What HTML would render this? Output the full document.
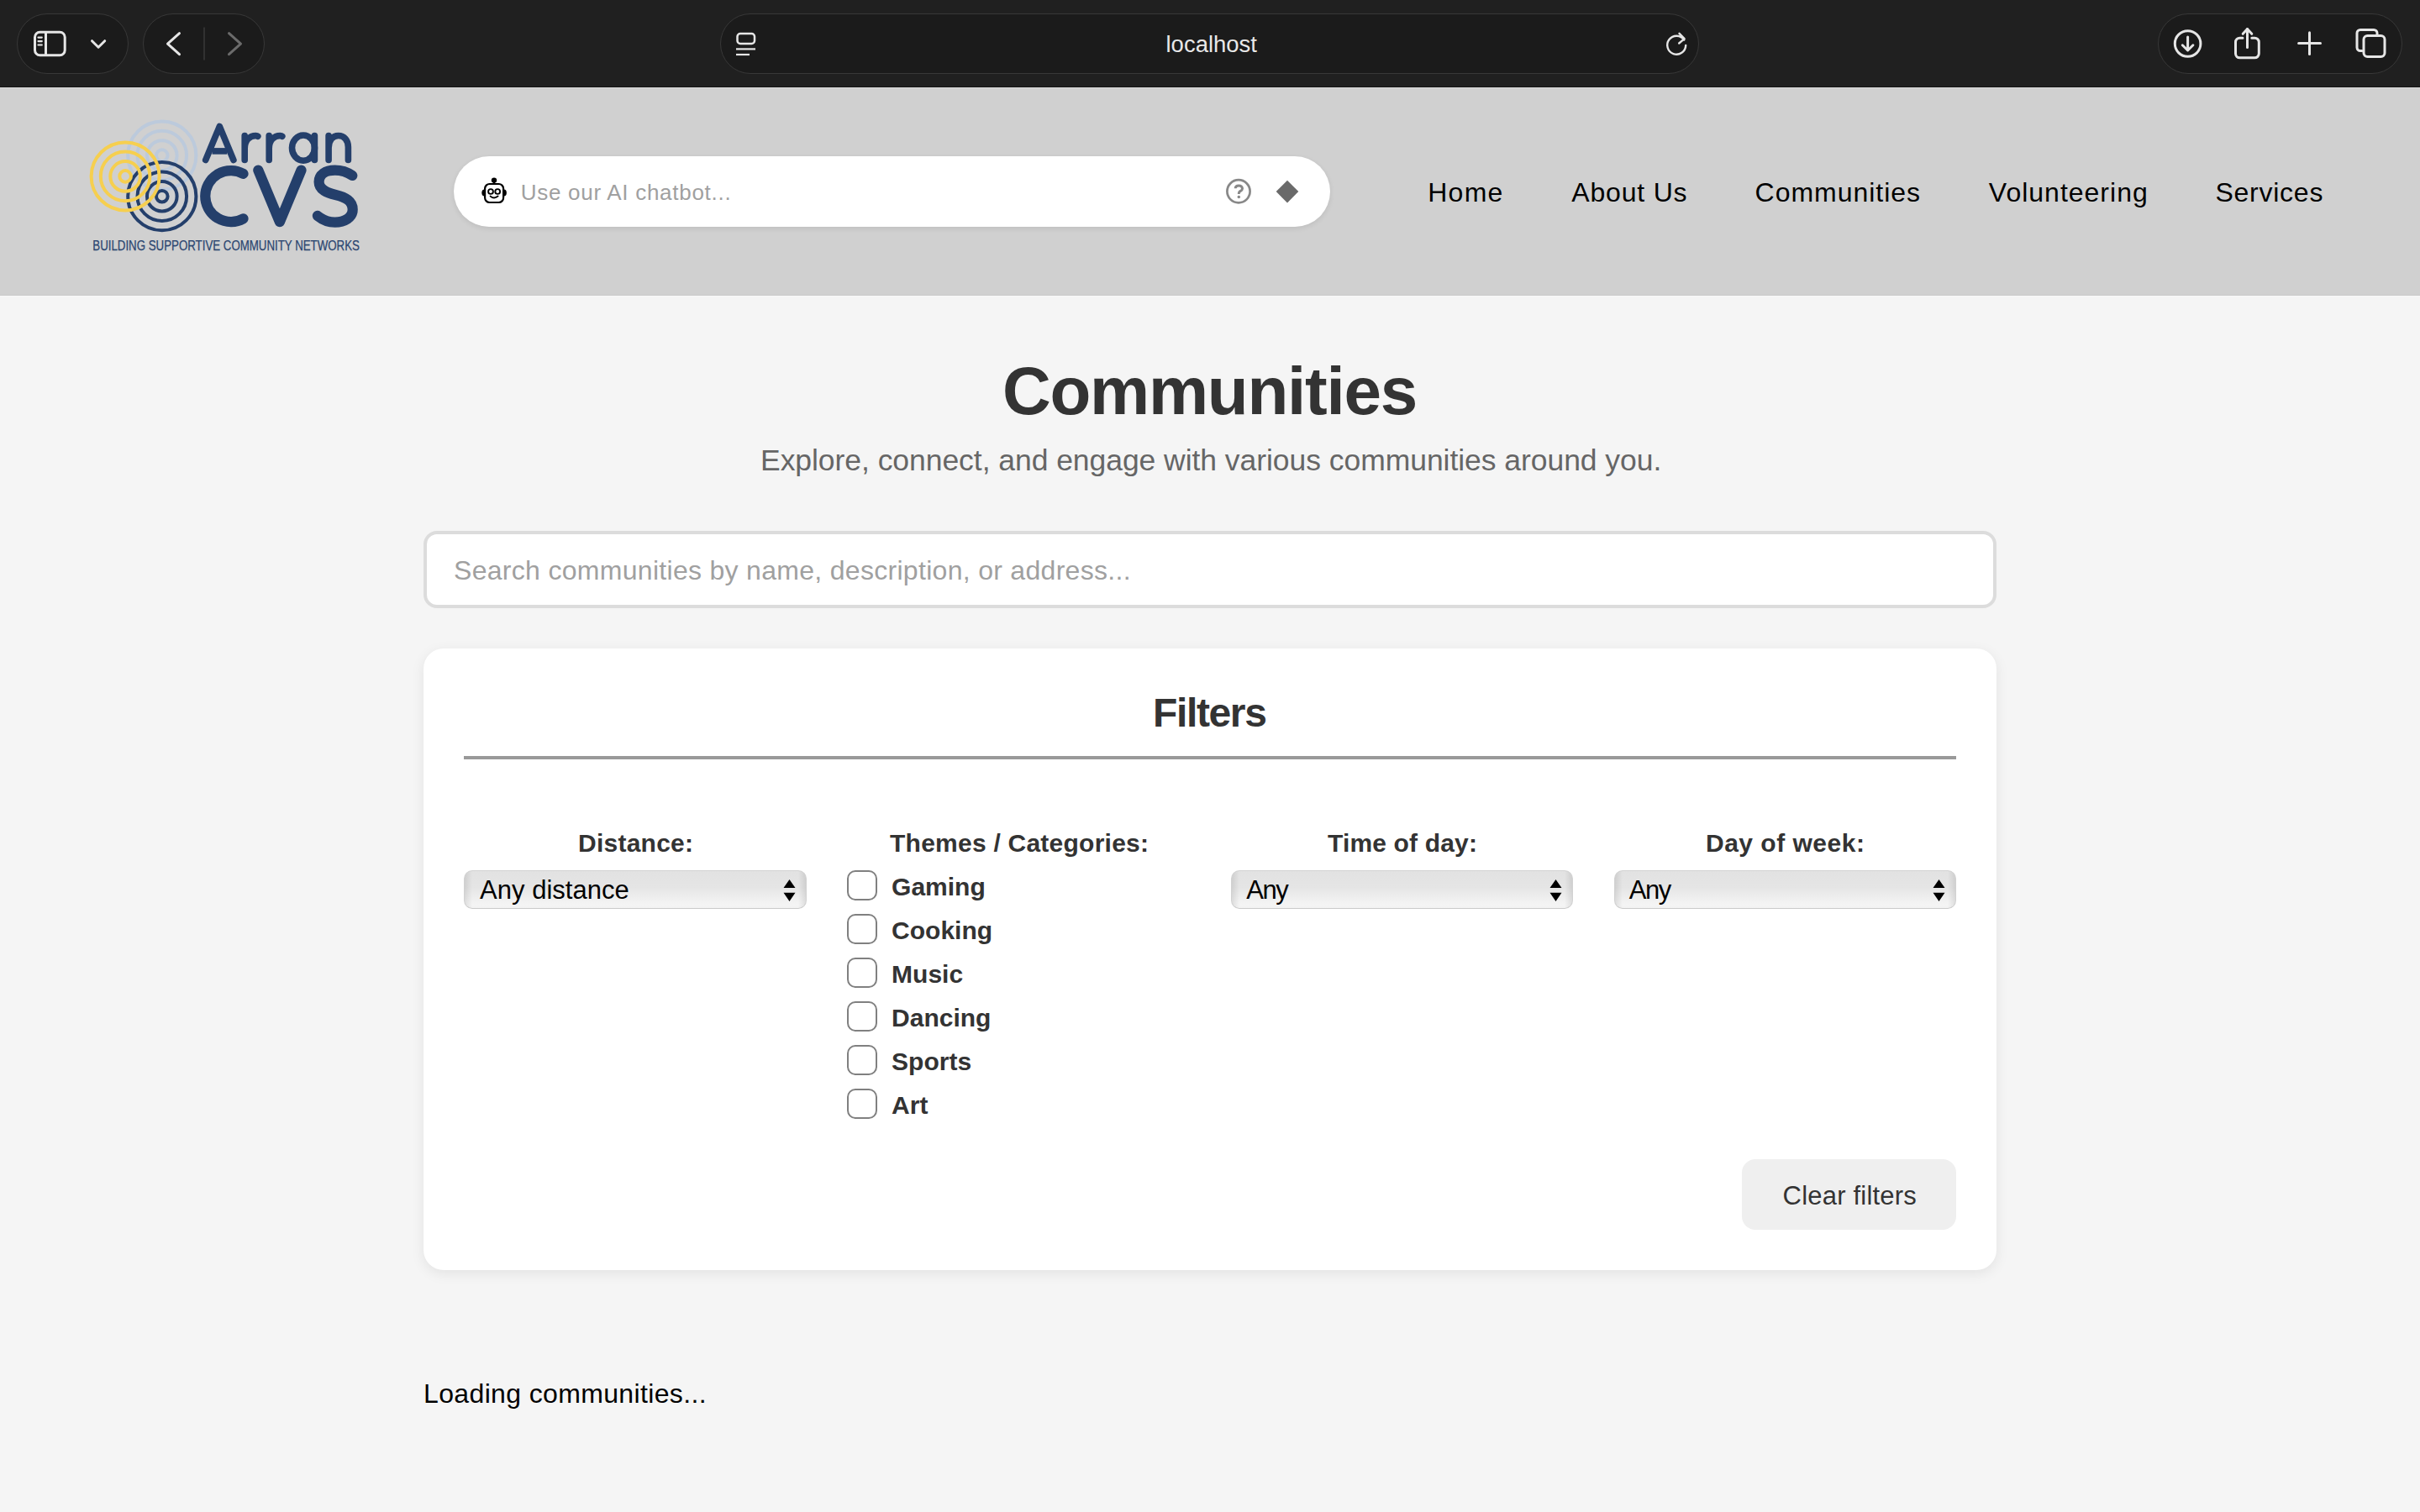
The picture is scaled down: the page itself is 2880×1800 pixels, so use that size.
<!DOCTYPE html>
<html>
<head>
<meta charset="utf-8">
<style>
html,body{margin:0;padding:0;}
body{width:2880px;height:1800px;overflow:hidden;position:relative;background:#f5f5f5;font-family:"Liberation Sans",sans-serif;}
.abs{position:absolute;}
.t{position:absolute;white-space:nowrap;line-height:1;}
#chrome{position:absolute;left:0;top:0;width:2880px;height:104px;background:#202020;}
#chrome .pill{position:absolute;top:16px;height:70px;border:1.8px solid #383838;border-radius:36px;background:#1b1b1b;}
#header{position:absolute;left:0;top:104px;width:2880px;height:248px;background:#d0d0d0;}
#chat{position:absolute;left:540px;top:82px;width:1043px;height:84px;border-radius:42px;background:#fff;box-shadow:0 2px 6px rgba(0,0,0,0.09);}
.nav{position:absolute;top:0;font-size:32px;color:#000;}
.sel{position:absolute;top:1036px;height:45.5px;box-sizing:border-box;border-radius:10px;border:1px solid #d2d2d2;border-bottom-color:#cacaca;background:linear-gradient(to right, rgba(0,0,0,0.09) 0, rgba(0,0,0,0) 9px, rgba(0,0,0,0) calc(100% - 9px), rgba(0,0,0,0.09) 100%),linear-gradient(#e2e2e2 0%,#e5e5e5 45%,#e9e9e9 55%,#f4f4f4 90%,#f2f2f2 100%);}
.cb{position:absolute;left:1008px;width:35.5px;height:35.5px;box-sizing:border-box;border:2.5px solid #808080;border-radius:10px;background:#fff;}
</style>
</head>
<body>
<div id="chrome">
  <div class="pill" style="left:20px;width:131px;"></div>
  <div class="pill" style="left:170px;width:143px;"></div>
  <div class="pill" style="left:857px;width:1163px;"></div>
  <div class="pill" style="left:2568px;width:289px;"></div>
  <div class="abs" style="left:0;top:103px;width:2880px;height:1px;background:#151515"></div>

  <svg class="abs" style="left:0;top:0" width="2880" height="104" viewBox="0 0 2880 104">
    <g fill="none" stroke="#e6e6e6" stroke-width="3" stroke-linecap="round" stroke-linejoin="round">
      <rect x="41.5" y="38.2" width="35.7" height="27.5" rx="6"/>
      <line x1="54.5" y1="38.5" x2="54.5" y2="65.5"/>
      <line x1="45.5" y1="44.6" x2="49.8" y2="44.6" stroke-width="2.2"/>
      <line x1="45.5" y1="49.1" x2="49.8" y2="49.1" stroke-width="2.2"/>
      <line x1="45.5" y1="53.5" x2="49.8" y2="53.5" stroke-width="2.2"/>
      <polyline points="109.5,48.7 117.1,56.2 124.7,48.7"/>
      <polyline points="213.5,39.7 199.5,52.2 213.5,64.7"/>
      <polyline points="272.5,39.7 286.5,52.2 272.5,64.7" stroke="#6b6b6b"/>
      <line x1="243" y1="32.5" x2="243" y2="71.5" stroke="#383838" stroke-width="1.6" stroke-linecap="butt"/>
      <rect x="877.5" y="40" width="20.5" height="12" rx="3.5" stroke-width="2.5"/>
      <line x1="876" y1="58.4" x2="899" y2="58.4" stroke-width="2.2" stroke-linecap="butt"/>
      <line x1="876" y1="65" x2="892" y2="65" stroke-width="2.2" stroke-linecap="butt"/>
      <path d="M2004.3,47.5 A11,11 0 1 0 2006.2,54" stroke-width="2.4"/>
      <polyline points="1998.5,39.8 2004.6,46.2 1998.2,51.5" stroke-width="2.4"/>
      <circle cx="2603.6" cy="52" r="15.3"/>
      <line x1="2603.6" y1="44" x2="2603.6" y2="59.5"/>
      <polyline points="2597.3,53.8 2603.6,60 2609.9,53.8"/>
      <path d="M2669,45.2 H2665.5 A5,5 0 0 0 2660.5,50.2 V63.8 A5,5 0 0 0 2665.5,68.8 H2683.3 A5,5 0 0 0 2688.3,63.8 V50.2 A5,5 0 0 0 2683.3,45.2 H2679.8"/>
      <line x1="2674.5" y1="34.5" x2="2674.5" y2="56.5"/>
      <polyline points="2669.2,40.3 2674.5,34.5 2679.8,40.3"/>
      <line x1="2748.5" y1="38.7" x2="2748.5" y2="64.5"/>
      <line x1="2735.6" y1="51.5" x2="2761.5" y2="51.5"/>
      <path d="M2811,60.5 H2809 A4,4 0 0 1 2805,56.5 V39.5 A4,4 0 0 1 2809,35.5 H2825 A4,4 0 0 1 2829,39.5 V42"/>
      <rect x="2813" y="42.5" width="25" height="25" rx="4.5"/>
    </g>
    <text x="1387.5" y="61.6" font-family="Liberation Sans" font-size="27" fill="#e8e8e8" textLength="108.5" lengthAdjust="spacingAndGlyphs">localhost</text>
  </svg>
</div>

<div id="header">
  <div class="abs" style="left:0;top:0;width:2880px;height:1px;background:#d9d9d9"></div>
  <div class="abs" style="left:0;top:247px;width:2880px;height:1px;background:#cbcbcb"></div>
  <div class="abs" style="left:0;top:248px;width:2880px;height:1px;background:#f8f8f8"></div>
  <svg class="abs" style="left:0;top:-104px" width="460" height="352" viewBox="0 0 460 352">
    <g fill="none" stroke-width="4">
      <g stroke="#bccadc">
        <circle cx="192.8" cy="185.1" r="6.8"/><circle cx="192.8" cy="185.1" r="17.8"/><circle cx="192.8" cy="185.1" r="29.3"/><circle cx="192.8" cy="185.1" r="40.6"/>
      </g>
      <g stroke="#243f6b">
        <circle cx="192.8" cy="233.7" r="6.8"/><circle cx="192.8" cy="233.7" r="17.8"/><circle cx="192.8" cy="233.7" r="29.3"/><circle cx="192.8" cy="233.7" r="40.6"/>
      </g>
      <g stroke="#f6cf4f">
        <circle cx="149.1" cy="209.9" r="6.8"/><circle cx="149.1" cy="209.9" r="17.8"/><circle cx="149.1" cy="209.9" r="29.3"/><circle cx="149.1" cy="209.9" r="40.5"/>
      </g>
    </g>
    <g fill="none" stroke="#243f6b" stroke-linecap="round" stroke-linejoin="round">
      <g stroke-width="7.6">
        <path d="M244.7,190.5 L261.3,150.5 L277.9,190.5"/>
        <path d="M252.5,179.9 H270.2" stroke-linecap="butt"/>
        <path d="M291.2,190.4 V161.6 M291.2,177 C291.2,167 297,161.5 304.5,161.5 C305.5,161.5 306.5,162 306.8,162.3"/>
        <path d="M320.2,190.4 V161.6 M320.2,177 C320.2,167 326,161.5 333.5,161.5 C334.5,161.5 335.5,162 335.8,162.3"/>
        <ellipse cx="361" cy="176.1" rx="13.5" ry="15.1"/>
        <path d="M374.4,161.5 V190.4"/>
        <path d="M391.1,161.5 V190.4 M391.1,176 C391.1,167 396,161.5 402.75,161.5 C409.5,161.5 414.4,167 414.4,175 V190.4"/>
      </g>
      <g stroke-width="12.2">
        <path d="M289.5,206.9 A30.5,30.5 0 1 0 289.5,260.3"/>
        <path d="M307.3,202.6 L332.9,264.2 L358.5,202.6"/>
        <path d="M419.3,209 C412,204 405,202.6 398.6,202.6 C387,202.6 379.6,208 379.6,216.5 C379.6,226 389,229.5 399.4,232 C411,234.8 419.7,239 419.7,249.5 C419.7,259 410,264.6 398.6,264.6 C390,264.6 383,261 377.9,256.9"/>
      </g>
    </g>
    <text x="110.3" y="297.9" font-family="Liberation Sans" font-size="15.9" fill="#2b4670" stroke="#2b4670" stroke-width="0.25" textLength="317.6" lengthAdjust="spacingAndGlyphs">BUILDING SUPPORTIVE COMMUNITY NETWORKS</text>
  </svg>
  <div id="chat">
    <svg class="abs" style="left:0;top:0" width="1043" height="84" viewBox="540 186 1043 84">
      <g fill="none" stroke="#000" stroke-width="2.2">
        <rect x="577.1" y="219" width="22" height="22" rx="5.5"/>
        <line x1="588" y1="215" x2="588" y2="219"/>
        <circle cx="584" cy="228" r="2.9" stroke-width="1.9"/>
        <circle cx="592.2" cy="228" r="2.9" stroke-width="1.9"/>
        <path d="M583.6,233.6 Q588,237.4 592.6,233.6" stroke-width="1.9" stroke-linecap="round"/>
      </g>
      <circle cx="588" cy="214.6" r="3.2" fill="#000"/>
      <path d="M576.5,225.5 A3,3.8 0 0 0 576.5,233.5 Z" fill="#000"/>
      <path d="M599.7,225.5 A3,3.8 0 0 1 599.7,233.5 Z" fill="#000"/>
      <circle cx="1474" cy="227.8" r="13.6" fill="none" stroke="#888" stroke-width="2.7"/>
      <path d="M1470.2,224.2 C1470.2,221.8 1472,220.9 1474.3,220.9 C1476.8,220.9 1478.5,222.4 1478.5,224.4 C1478.5,226.6 1476.4,227.3 1475.2,228.2 C1474.5,228.8 1474.3,229.5 1474.3,231" fill="none" stroke="#888" stroke-width="3"/>
      <circle cx="1474.3" cy="234.6" r="1.75" fill="#888"/>
      <path d="M1532,214.8 L1545.3,228.1 L1532,241.4 L1518.7,228.1 Z" fill="#6a6a6a"/>
    </svg>
    <div class="t" style="left:79.7px;top:30px;font-size:26px;letter-spacing:0.72px;color:#a0a0a0;">Use our AI chatbot...</div>
  </div>
  <div class="t nav" style="left:1699.2px;top:109.1px;letter-spacing:1.27px">Home</div>
  <div class="t nav" style="left:1870.3px;top:109.1px;letter-spacing:0.81px">About Us</div>
  <div class="t nav" style="left:2088.6px;top:109.1px;letter-spacing:0.97px">Communities</div>
  <div class="t nav" style="left:2366.8px;top:109.1px;letter-spacing:1.0px">Volunteering</div>
  <div class="t nav" style="left:2636.5px;top:109.1px;letter-spacing:0.74px">Services</div>
</div>

<!--MAIN-->
<div id="main">
<div class="t" style="left:1193px;top:426.2px;font-size:80px;font-weight:bold;color:#333;letter-spacing:-1.26px;">Communities</div>
<div class="t" style="left:905px;top:530.7px;font-size:35.5px;color:#666;letter-spacing:-0.05px;">Explore, connect, and engage with various communities around you.</div>
<div class="abs" style="left:504px;top:632px;width:1864px;height:84px;border:4px solid #dcdcdc;border-radius:16px;background:#fff;"></div>
<div class="t" style="left:540px;top:662.9px;font-size:32px;color:#a0a0a0;letter-spacing:0.3px;">Search communities by name, description, or address...</div>
<div class="abs" style="left:504px;top:772px;width:1872px;height:740px;border-radius:24px;background:#fff;box-shadow:0 4px 16px rgba(0,0,0,0.08);"></div>
<div class="t" style="left:1372px;top:825.3px;font-size:48px;font-weight:bold;color:#333;letter-spacing:-1.37px;">Filters</div>
<div class="abs" style="left:552px;top:900px;width:1776px;height:4px;background:#999;"></div>
<div class="t" style="left:688px;top:988.6px;font-size:30px;font-weight:bold;color:#333;letter-spacing:0.25px;">Distance:</div>
<div class="t" style="left:1059px;top:988.6px;font-size:30px;font-weight:bold;color:#333;letter-spacing:0.24px;">Themes / Categories:</div>
<div class="t" style="left:1580px;top:988.6px;font-size:30px;font-weight:bold;color:#333;letter-spacing:0.16px;">Time of day:</div>
<div class="t" style="left:2030px;top:988.6px;font-size:30px;font-weight:bold;color:#333;letter-spacing:0.5px;">Day of week:</div>
<div class="sel" style="left:552px;width:407.5px;"><svg class="abs" style="right:12px;top:9.5px" width="15" height="27" viewBox="0 0 15 27"><path d="M7.5,0 L14.5,10 L0.5,10 Z M0.5,15.7 L14.5,15.7 L7.5,26 Z" fill="#000"/></svg></div>
<div class="sel" style="left:1464.5px;width:407px;"><svg class="abs" style="right:12px;top:9.5px" width="15" height="27" viewBox="0 0 15 27"><path d="M7.5,0 L14.5,10 L0.5,10 Z M0.5,15.7 L14.5,15.7 L7.5,26 Z" fill="#000"/></svg></div>
<div class="sel" style="left:1921px;width:407px;"><svg class="abs" style="right:12px;top:9.5px" width="15" height="27" viewBox="0 0 15 27"><path d="M7.5,0 L14.5,10 L0.5,10 Z M0.5,15.7 L14.5,15.7 L7.5,26 Z" fill="#000"/></svg></div>
<div class="t" style="left:571px;top:1044.0px;font-size:31px;color:#000;letter-spacing:0.03px;">Any distance</div>
<div class="t" style="left:1483.2px;top:1044.0px;font-size:31px;color:#000;letter-spacing:-1.4px;">Any</div>
<div class="t" style="left:1938.7px;top:1044.0px;font-size:31px;color:#000;letter-spacing:-1.4px;">Any</div>
<div class="cb" style="top:1036px"></div>
<div class="t" style="left:1061.1px;top:1040.6px;font-size:30px;font-weight:bold;color:#333;letter-spacing:0px;">Gaming</div>
<div class="cb" style="top:1088px"></div>
<div class="t" style="left:1061.1px;top:1092.6px;font-size:30px;font-weight:bold;color:#333;letter-spacing:0px;">Cooking</div>
<div class="cb" style="top:1140px"></div>
<div class="t" style="left:1061.1px;top:1144.6px;font-size:30px;font-weight:bold;color:#333;letter-spacing:0px;">Music</div>
<div class="cb" style="top:1192px"></div>
<div class="t" style="left:1061.1px;top:1196.6px;font-size:30px;font-weight:bold;color:#333;letter-spacing:0px;">Dancing</div>
<div class="cb" style="top:1244px"></div>
<div class="t" style="left:1061.1px;top:1248.6px;font-size:30px;font-weight:bold;color:#333;letter-spacing:0px;">Sports</div>
<div class="cb" style="top:1296px"></div>
<div class="t" style="left:1061.1px;top:1300.6px;font-size:30px;font-weight:bold;color:#333;letter-spacing:0px;">Art</div>
<div class="abs" style="left:2073px;top:1380px;width:255px;height:84px;border-radius:16px;background:#efefef;"></div>
<div class="t" style="left:2121.6px;top:1407.8px;font-size:31px;color:#333;letter-spacing:0.2px;">Clear filters</div>
<div class="t" style="left:504px;top:1642.8px;font-size:32px;color:#000;letter-spacing:0.36px;">Loading communities...</div>
</div>
</body>
</html>
